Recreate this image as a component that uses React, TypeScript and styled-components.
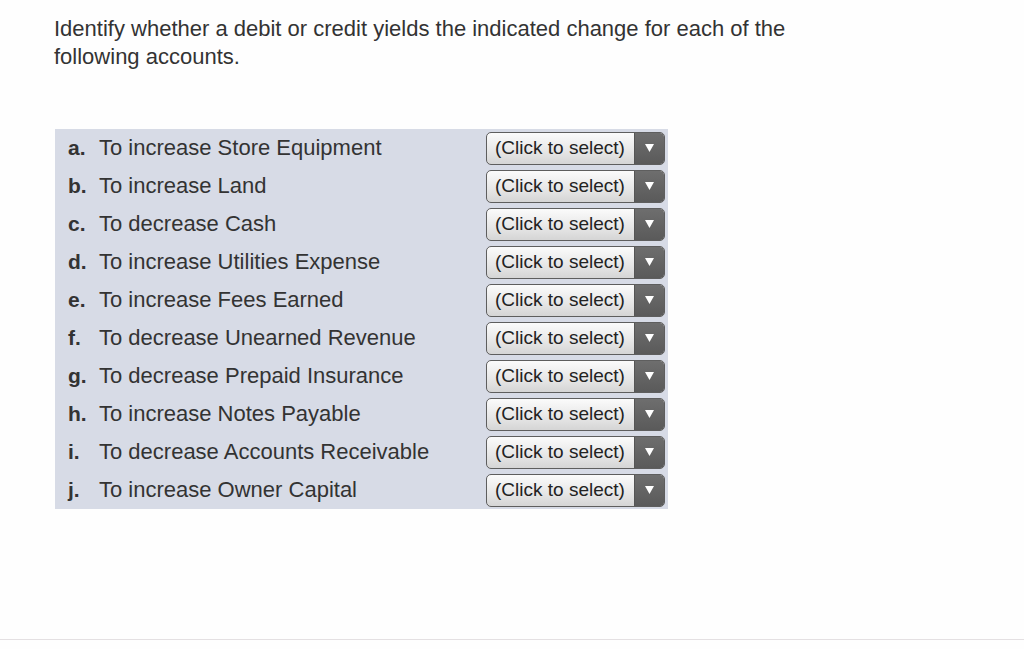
import styled, { createGlobalStyle } from "styled-components";

const Global = createGlobalStyle`
  html, body {
    margin: 0;
    padding: 0;
    background: #fefefe;
  }
  body {
    font-family: "Liberation Sans", Arial, sans-serif;
    color: #333;
  }
`;

const Page = styled.div`
  height: 640px;
  padding: 15px 0 0 54px;
  box-sizing: border-box;
  border-bottom: 1px solid #e4e0e2;
`;

const Prompt = styled.p`
  margin: 0;
  width: 760px;
  font-size: 22px;
  line-height: 28px;
  color: #333;
`;

const Table = styled.div`
  margin-top: 58px;
  margin-left: 1px;
  width: 613px;
  background: #d7dbe6;
  display: flex;
  flex-direction: column;
`;

const Row = styled.div`
  height: 38px;
  display: flex;
  align-items: center;
  padding-left: 13px;
`;

const Letter = styled.span`
  width: 31px;
  font-size: 21px;
  font-weight: bold;
  color: #333;
`;

const Label = styled.span`
  flex: 1;
  font-size: 22px;
  color: #333;
`;

const Select = styled.div`
  margin-right: 3px;
  width: 179px;
  height: 33px;
  box-sizing: border-box;
  display: flex;
  border: 1px solid #5e5e5e;
  border-radius: 5px;
  overflow: hidden;
  background: linear-gradient(#fbfbfb, #e6e6e6 60%, #d5d5d5);
`;

const SelectText = styled.span`
  flex: 1;
  display: flex;
  align-items: center;
  padding-left: 8px;
  font-size: 19px;
  color: #222;
  white-space: nowrap;
`;

const Arrow = styled.span`
  width: 29px;
  display: flex;
  align-items: center;
  justify-content: center;
  background: linear-gradient(#6e6e6e, #5a5a5a);
  border-left: 1px solid #555;
`;

const items: [string, string][] = [
  ["a.", "To increase Store Equipment"],
  ["b.", "To increase Land"],
  ["c.", "To decrease Cash"],
  ["d.", "To increase Utilities Expense"],
  ["e.", "To increase Fees Earned"],
  ["f.", "To decrease Unearned Revenue"],
  ["g.", "To decrease Prepaid Insurance"],
  ["h.", "To increase Notes Payable"],
  ["i.", "To decrease Accounts Receivable"],
  ["j.", "To increase Owner Capital"],
];

export default function App() {
  return (
    <>
      <Global />
      <Page>
        <Prompt>
          Identify whether a debit or credit yields the indicated change for each of the following accounts.
        </Prompt>
        <Table>
          {items.map(([l, t]) => (
            <Row key={l}>
              <Letter>{l}</Letter>
              <Label>{t}</Label>
              <Select>
                <SelectText>(Click to select)</SelectText>
                <Arrow>
                  <svg width="9" height="8" viewBox="0 0 9 8">
                    <polygon points="0,0 9,0 4.5,8" fill="#fff" />
                  </svg>
                </Arrow>
              </Select>
            </Row>
          ))}
        </Table>
      </Page>
    </>
  );
}
